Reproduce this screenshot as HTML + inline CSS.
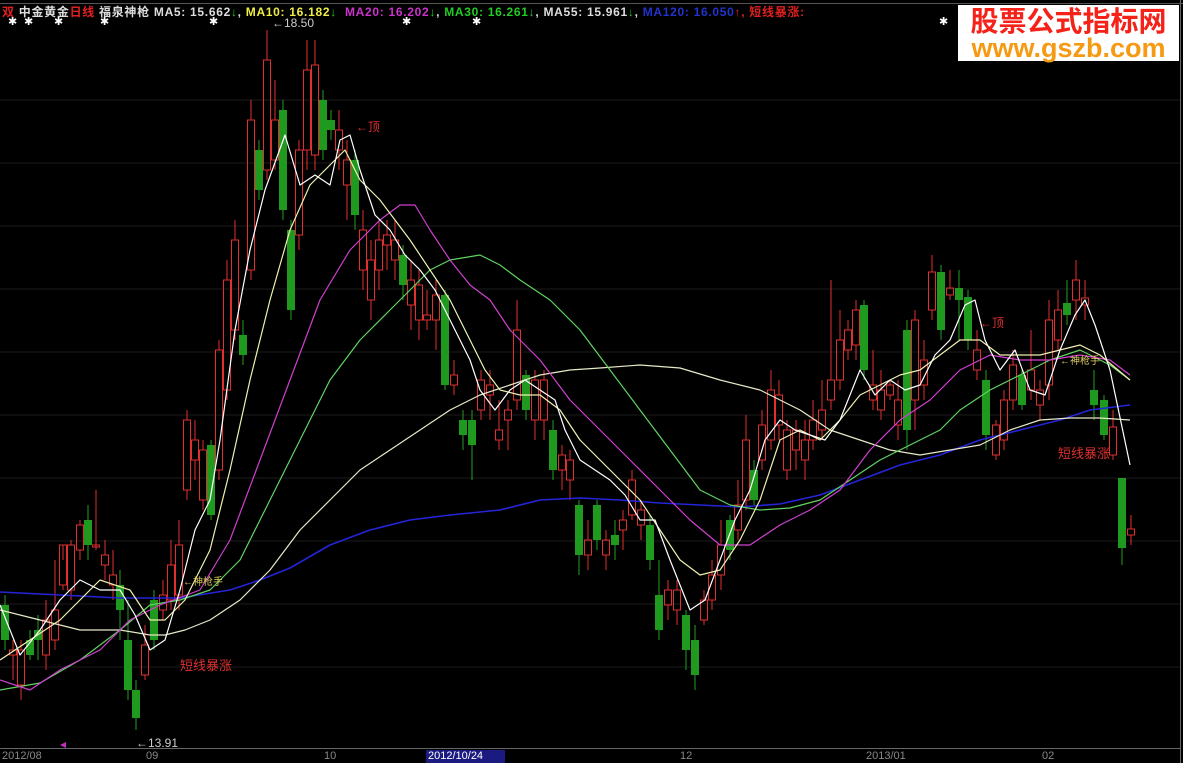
<!DOCTYPE html>
<html><head><meta charset="utf-8">
<style>
html,body{margin:0;padding:0;background:#000;width:1183px;height:763px;overflow:hidden;font-family:"Liberation Sans","Noto Sans CJK SC",sans-serif}
svg{position:absolute;left:0;top:0}
.hd{position:absolute;top:3px;left:2px;font-size:12px;white-space:nowrap;font-weight:bold;letter-spacing:0.7px}
.wm{position:absolute;left:958px;top:5px;width:221px;height:56px;background:#fff;text-align:center}
.wm .a{color:#f5221a;font-size:28px;font-weight:bold;line-height:30px;margin-top:0;letter-spacing:0px;font-family:"Noto Sans CJK SC",sans-serif}
.wm .b{color:#f59a12;font-size:27px;font-weight:bold;line-height:26px;font-family:"Liberation Sans",sans-serif}
.ax{position:absolute;top:750px;font-size:11px;color:#888;font-family:"Liberation Sans",sans-serif}
</style></head><body>
<svg id="c" width="1183" height="763" xmlns="http://www.w3.org/2000/svg">
<g stroke="#1c1c1c" stroke-width="1">
<line x1="0" y1="100" x2="1180" y2="100"/><line x1="0" y1="163" x2="1180" y2="163"/>
<line x1="0" y1="226" x2="1180" y2="226"/><line x1="0" y1="289" x2="1180" y2="289"/>
<line x1="0" y1="352" x2="1180" y2="352"/><line x1="0" y1="415" x2="1180" y2="415"/>
<line x1="0" y1="478" x2="1180" y2="478"/><line x1="0" y1="541" x2="1180" y2="541"/>
<line x1="0" y1="604" x2="1180" y2="604"/><line x1="0" y1="667" x2="1180" y2="667"/>
</g>
<line x1="0" y1="3.5" x2="1183" y2="3.5" stroke="#555"/>
<line x1="0" y1="748.5" x2="1180" y2="748.5" stroke="#666"/>
<line x1="1180.5" y1="0" x2="1180.5" y2="763" stroke="#666"/>
<g id="cd"></g>
<g fill="none" stroke-width="1.2" stroke-linejoin="round">
<polyline stroke="#2424d8" stroke-width="1.6" points="0,592 60,595 120,598 180,598 230,590 260,580 290,568 330,545 370,530 410,520 450,515 500,510 540,500 580,498 620,500 660,503 700,505 740,507 780,504 820,495 860,480 900,465 940,455 980,440 1020,430 1060,420 1090,410 1130,405"/>
<polyline stroke="#e8e8c8" points="0,610 40,620 80,630 120,630 150,635 165,635 185,630 210,620 240,600 270,570 300,530 330,500 360,470 390,450 420,430 450,410 480,395 510,385 540,375 570,370 600,368 640,365 680,368 720,380 760,390 800,410 830,430 860,440 890,450 920,455 950,450 980,445 1010,430 1040,420 1070,418 1100,418 1130,420"/>
<polyline stroke="#5fd35f" points="0,690 40,683 80,660 120,630 150,605 180,600 210,590 240,560 270,500 300,440 330,380 360,340 390,310 410,290 430,270 450,260 480,255 500,265 520,280 550,300 580,330 610,370 640,410 670,450 700,490 730,505 760,510 790,508 820,500 850,480 880,460 910,445 940,430 960,410 990,390 1020,375 1050,360 1080,350 1110,365 1130,380"/>
<polyline stroke="#d040d0" points="0,680 30,690 60,670 100,650 130,620 160,605 200,590 230,540 260,460 290,380 320,300 350,250 380,220 400,205 415,205 430,230 450,260 470,285 490,300 510,330 540,360 570,400 600,430 630,460 660,490 690,520 720,545 750,545 780,525 810,510 840,490 870,450 900,420 930,400 960,370 990,355 1020,360 1050,360 1080,355 1110,360 1130,375"/>
<polyline stroke="#f0f0b0" points="0,660 30,640 60,620 100,580 130,590 150,620 165,620 185,600 210,550 230,470 250,380 270,300 290,230 310,185 330,165 345,150 360,180 380,200 395,220 410,240 430,270 450,300 470,340 485,370 500,390 520,395 540,395 560,410 580,440 600,460 620,480 640,500 660,530 680,560 700,575 720,570 740,540 760,500 780,440 800,430 820,440 840,420 860,395 880,385 900,375 920,370 940,355 960,340 980,340 1000,355 1020,355 1040,355 1060,350 1080,345 1100,355 1130,380"/>
<polyline stroke="#ffffff" points="0,605 20,655 40,630 60,600 80,580 100,590 120,590 135,615 150,650 165,640 180,590 195,530 210,500 220,440 235,330 250,250 265,190 285,135 300,185 315,175 330,185 340,140 350,135 360,170 375,215 390,230 405,255 420,270 435,290 450,320 460,340 470,360 480,390 495,410 510,390 525,380 540,390 555,400 565,430 580,460 595,470 610,480 625,495 640,520 655,520 670,560 690,610 705,600 720,560 735,520 750,490 765,440 780,420 795,430 810,435 825,440 840,420 860,370 875,395 890,380 905,390 920,385 935,355 950,340 965,305 975,300 985,340 1000,370 1015,350 1030,390 1045,395 1060,350 1075,315 1085,300 1095,325 1110,370 1130,465"/>
</g>
<g font-size="12" font-family="Liberation Sans,Noto Sans CJK SC,sans-serif">
<text x="356" y="131" fill="#e03030">←顶</text>
<text x="980" y="327" fill="#e03030">←顶</text>
<text x="180" y="670" fill="#e03030" font-size="13">短线暴涨</text>
<text x="1058" y="458" fill="#e03030" font-size="13">短线暴涨</text>
<text x="183" y="585" fill="#e0d060" font-size="10">←神枪手</text>
<text x="1060" y="364" fill="#e0d060" font-size="10">←神枪手</text>
<text x="272" y="27" fill="#ccc" font-size="12">←18.50</text>
<text x="136" y="747" fill="#ccc" font-size="12">←13.91</text>
</g>
<polygon points="60,745 66,742 66,748" fill="#c030c0"/>
<g fill="#fff" font-size="11"><text x="8" y="25">✱</text><text x="24" y="25">✱</text><text x="54" y="25">✱</text><text x="100" y="25">✱</text><text x="209" y="25">✱</text><text x="402" y="25">✱</text><text x="472" y="25">✱</text><text x="939" y="25">✱</text></g>
<rect x="426" y="750" width="79" height="13" fill="#1a1a80"/>
</svg>
<div class="hd"><span style="color:#e02020">双</span> <span style="color:#ddd">中金黄金</span><span style="color:#e02020">日线</span> <span style="color:#ddd">福泉神枪</span> <span style="color:#ddd">MA5: 15.662</span><span style="color:#2c2">↓</span><span style="color:#ddd">,</span> <span style="color:#ee4">MA10: 16.182</span><span style="color:#2c2">↓</span>, <span style="color:#c3c">MA20: 16.202</span><span style="color:#2c2">↓</span><span style="color:#ddd">,</span> <span style="color:#2c2">MA30: 16.261↓</span><span style="color:#ddd">, MA55: 15.961</span><span style="color:#2c2">↓</span><span style="color:#ddd">,</span> <span style="color:#2233cc">MA120: 16.050</span><span style="color:#e02020">↑, 短线暴涨:</span></div>
<div class="wm"><div class="a">股票公式指标网</div><div class="b">www.gszb.com</div></div>
<div class="ax" style="left:2px">2012/08</div>
<div class="ax" style="left:146px">09</div>
<div class="ax" style="left:324px">10</div>
<div class="ax" style="left:428px;color:#fff">2012/10/24</div>
<div class="ax" style="left:680px">12</div>
<div class="ax" style="left:866px">2013/01</div>
<div class="ax" style="left:1042px">02</div>
<script>
var D=[[5,605,640,595,650,0],[13,655,650,640,680,1],[21,650,685,640,700,1],[30,640,655,630,660,0],[38,630,640,615,660,0],[46,620,655,600,670,1],[55,610,640,560,650,1],[63,585,545,560,590,1],[71,590,545,540,600,1],[80,550,525,520,560,1],[88,520,545,505,560,0],[96,545,545,490,550,1],[105,565,555,540,580,1],[113,575,585,550,600,1],[120,585,610,570,640,0],[128,640,690,600,700,0],[136,690,718,680,730,0],[145,645,675,625,680,1],[154,600,640,590,650,0],[163,595,610,580,620,1],[171,565,600,540,610,1],[179,545,595,520,610,1],[187,420,490,410,500,1],[195,440,460,420,480,1],[203,450,500,440,510,1],[211,445,515,440,520,0],[219,350,470,340,480,1],[227,280,390,260,400,1],[235,240,330,220,340,1],[243,335,355,320,365,0],[251,120,270,100,280,1],[259,150,190,140,200,0],[267,60,170,30,180,1],[275,120,160,80,170,1],[283,110,210,100,220,0],[291,230,310,220,320,0],[299,150,235,140,250,1],[307,70,150,40,170,1],[315,65,155,40,170,1],[323,100,150,90,160,0],[331,120,130,110,140,0],[339,130,150,110,170,1],[347,160,185,140,220,1],[355,160,215,150,230,0],[363,230,270,210,290,1],[371,260,300,240,320,1],[379,240,270,220,290,1],[387,235,245,220,270,1],[395,240,260,220,280,1],[403,255,285,245,300,0],[411,280,305,260,330,1],[419,285,320,270,340,1],[427,315,320,290,330,1],[436,295,320,280,350,1],[445,295,385,290,390,0],[454,375,385,360,395,1],[463,420,435,410,450,0],[472,420,445,410,480,0],[481,380,410,370,420,1],[490,385,395,370,420,1],[499,430,440,400,450,1],[508,410,420,400,450,1],[517,330,400,300,410,1],[526,375,410,370,420,0],[535,380,420,370,440,1],[544,380,420,370,440,1],[553,430,470,420,480,0],[562,455,470,445,490,1],[570,460,480,450,500,1],[579,505,555,500,575,0],[588,540,555,520,570,1],[597,505,540,500,550,0],[606,540,555,530,570,1],[615,535,545,520,560,0],[623,520,530,510,550,1],[632,480,515,470,520,1],[641,510,525,500,540,1],[650,525,560,515,570,0],[659,595,630,560,640,0],[668,590,605,580,620,1],[677,590,610,580,625,1],[686,615,650,610,670,0],[695,640,675,625,690,0],[704,600,620,590,625,1],[712,575,600,560,610,1],[721,545,575,520,590,1],[730,520,550,515,560,0],[738,505,530,480,540,1],[746,440,500,415,510,1],[754,470,500,460,505,0],[762,425,460,410,470,1],[771,390,440,370,450,1],[779,395,425,380,440,1],[787,430,470,420,480,1],[796,430,450,420,470,1],[805,440,460,420,480,1],[813,420,440,400,450,1],[822,410,430,380,440,1],[831,380,400,280,410,1],[840,340,380,310,390,1],[848,330,350,320,360,1],[856,310,345,300,360,1],[864,305,370,300,380,0],[873,385,400,350,410,1],[881,390,410,370,420,1],[890,385,395,380,400,1],[898,400,425,380,440,1],[907,330,430,320,450,0],[915,320,400,310,430,1],[924,360,385,340,400,1],[932,272,310,255,320,1],[941,272,330,265,340,0],[950,288,295,270,300,1],[959,288,300,270,340,0],[968,297,340,290,350,0],[977,350,370,330,380,1],[986,380,435,370,450,0],[996,425,455,420,460,1],[1004,400,440,390,450,1],[1013,365,400,350,410,1],[1022,375,405,370,410,0],[1031,370,390,330,400,1],[1040,390,405,380,420,1],[1049,320,385,300,400,1],[1058,310,340,290,350,1],[1067,303,315,280,325,0],[1076,280,300,260,320,1],[1085,298,305,280,320,1],[1094,390,405,370,420,0],[1104,400,435,395,440,0],[1113,427,455,410,460,1],[1122,478,548,478,565,0],[1131,529,535,515,545,1]];
var s='';D.forEach(function(d){var x=d[0],t=Math.min(d[1],d[2]),b=Math.max(d[1],d[2]),h=Math.max(b-t,2);
if(d[5]){s+='<line x1="'+x+'" y1="'+d[3]+'" x2="'+x+'" y2="'+t+'" stroke="#e03030"/><line x1="'+x+'" y1="'+b+'" x2="'+x+'" y2="'+d[4]+'" stroke="#e03030"/><rect x="'+(x-3.5)+'" y="'+t+'" width="7" height="'+h+'" fill="none" stroke="#e03030"/>';}
else{s+='<line x1="'+x+'" y1="'+d[3]+'" x2="'+x+'" y2="'+d[4]+'" stroke="#20a020"/><rect x="'+(x-4)+'" y="'+t+'" width="8" height="'+h+'" fill="#1f9a1f"/>';}});
document.getElementById('cd').innerHTML=s;
</script>
</body></html>
